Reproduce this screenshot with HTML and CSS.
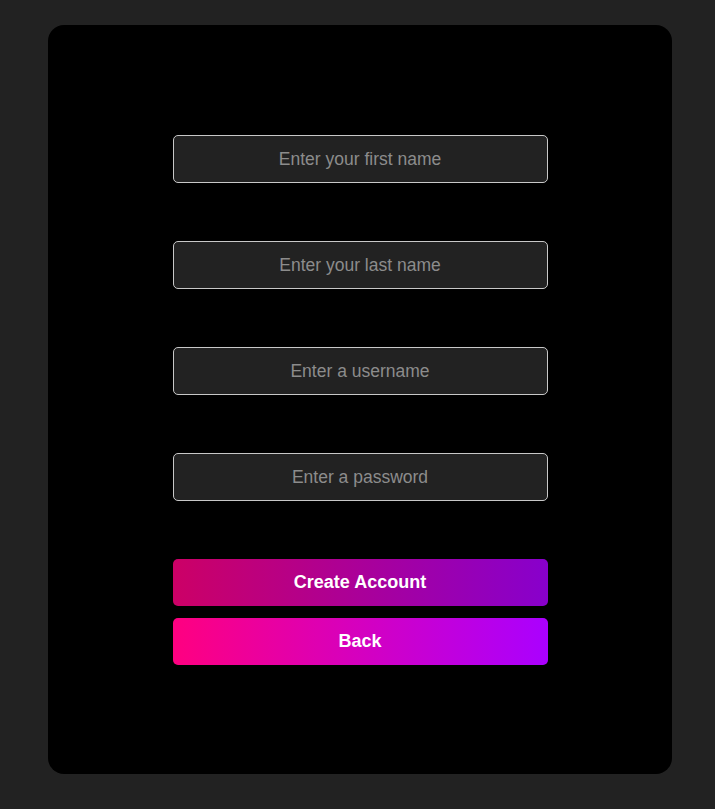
FILE: index.html
```html
<!DOCTYPE html>
<html lang="en">
<head>
<meta charset="utf-8">
<title>Sign up</title>
<link rel="stylesheet" href="styles.css">
</head>
<body>
<main class="card">
  <form class="form">
    <div class="fields">
      <input class="field" type="text" placeholder="Enter your first name">
      <input class="field" type="text" placeholder="Enter your last name">
      <input class="field" type="text" placeholder="Enter a username">
      <input class="field" type="password" placeholder="Enter a password">
    </div>
    <div class="actions">
      <button class="btn btn-create" type="button">Create Account</button>
      <button class="btn btn-back" type="button">Back</button>
    </div>
  </form>
</main>
</body>
</html>
```
FILE: styles.css
```css
html, body {
  margin: 0;
  padding: 0;
  background: #222222;
  font-family: "Liberation Sans", Arial, sans-serif;
}
body {
  padding: 25px 0 35px 48px;
}
.card {
  box-sizing: border-box;
  width: 624px;
  height: 749px;
  background: #000000;
  border-radius: 16px;
  padding-top: 110px;
  display: flex;
  justify-content: center;
}
.form {
  width: 375px;
  display: flex;
  flex-direction: column;
  gap: 58px;
}
.fields {
  display: flex;
  flex-direction: column;
  gap: 58px;
}
.field {
  box-sizing: border-box;
  width: 375px;
  height: 48px;
  margin: 0;
  background: #222222;
  border: 1px solid #c8c8c8;
  border-radius: 5px;
  color: #ffffff;
  font-family: "Liberation Sans", Arial, sans-serif;
  font-size: 17.5px;
  text-align: center;
  outline: none;
}
.field::placeholder {
  color: #8c8c8c;
}
.actions {
  display: flex;
  flex-direction: column;
  gap: 12px;
}
.btn {
  box-sizing: border-box;
  width: 375px;
  height: 47px;
  border: none;
  border-radius: 5px;
  color: #ffffff;
  font-family: "Liberation Sans", Arial, sans-serif;
  font-size: 18px;
  font-weight: bold;
  cursor: pointer;
}
.btn-create {
  background: linear-gradient(to right, #cc0066, #8800cc);
}
.btn-back {
  background: linear-gradient(to right, #ff0080, #aa00ff);
}
```
